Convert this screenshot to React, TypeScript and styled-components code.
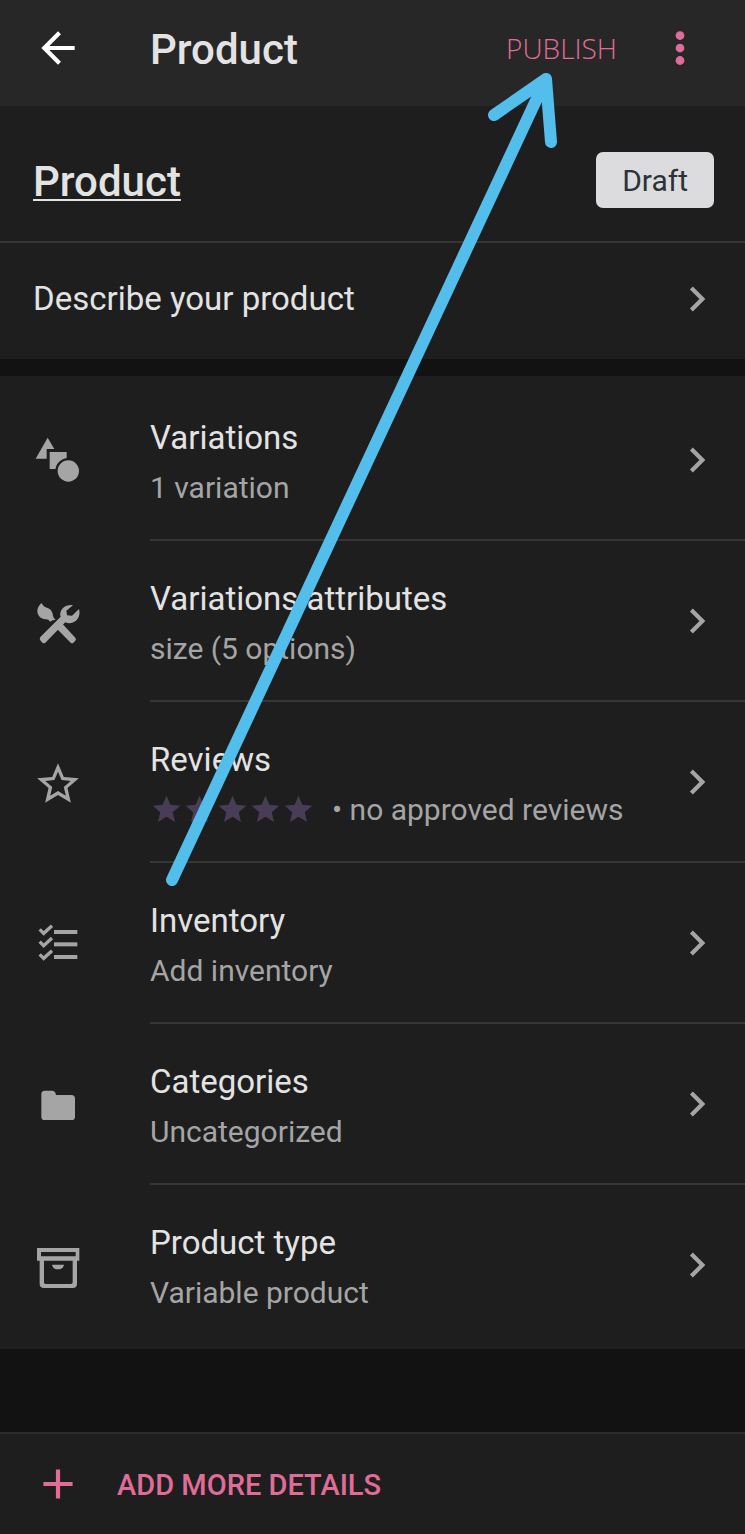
import React from "react";
import styled, { createGlobalStyle } from "styled-components";

const colors = {
  page: "#121212",
  surface: "#1e1e1e",
  bar: "#272727",
  divider: "#363636",
  text: "#e3e3e3",
  muted: "#a5a5a5",
  accent: "#e06c98",
  rating: "#493c57",
  annotation: "#53bdeb",
};

const GlobalStyle = createGlobalStyle`
  *, *::before, *::after { box-sizing: border-box; }
  body {
    margin: 0;
    background: ${colors.page};
    color: ${colors.text};
    font-family: Roboto, "Liberation Sans", sans-serif;
  }
  button { font-family: inherit; }
`;

const Screen = styled.div`
  position: relative;
  display: flex;
  flex-direction: column;
  min-height: 100vh;
`;

const AppBar = styled.header`
  display: flex;
  align-items: center;
  height: 106px;
  padding: 0 40px 10px 33px;
  background: ${colors.bar};
`;

const IconButton = styled.button<{ $color: string }>`
  display: flex;
  flex: none;
  padding: 0;
  border: 0;
  background: none;
  color: ${(p) => p.$color};
  cursor: pointer;
`;

const BarTitle = styled.h1`
  flex: 1;
  margin: 0 0 0 67px;
  padding-top: 4px;
  font-size: 42px;
  font-weight: 500;
  line-height: 50px;
`;

const PublishButton = styled.button`
  margin-right: 38px;
  padding: 0;
  border: 0;
  background: none;
  color: ${colors.accent};
  font-family: "Open Sans", "Noto Sans", sans-serif;
  font-size: 28px;
  font-weight: 300;
  line-height: 50px;
  cursor: pointer;
`;

const NameRow = styled.section`
  display: flex;
  align-items: center;
  justify-content: space-between;
  height: 137px;
  padding: 12px 31px 0 33px;
  border-bottom: 2px solid ${colors.divider};
  background: ${colors.surface};
`;

const ProductName = styled.h2`
  margin: 0;
  padding-top: 4px;
  font-size: 42px;
  font-weight: 500;
  line-height: 50px;
  text-decoration: underline;
  text-decoration-thickness: 2px;
  text-underline-offset: 3px;
  text-decoration-skip-ink: none;
`;

const StatusTag = styled.span`
  padding: 2px 26px 0;
  border-radius: 7px;
  background: #dcdcdf;
  color: #2c3338;
  font-size: 30px;
  line-height: 54px;
`;

const DescribeRow = styled.button`
  display: flex;
  align-items: center;
  justify-content: space-between;
  height: 116px;
  padding: 0 23px 4px 33px;
  border: 0;
  background: ${colors.surface};
  color: ${colors.muted};
  text-align: left;
  cursor: pointer;
`;

const DetailList = styled.ul`
  margin: 17px 0 0;
  padding: 4px 0 3px;
  background: ${colors.surface};
  list-style: none;
`;

const DetailRow = styled.button`
  display: flex;
  gap: 67px;
  width: 100%;
  padding: 0 0 0 33px;
  border: 0;
  background: none;
  color: ${colors.muted};
  text-align: left;
  cursor: pointer;

  & > svg { margin-top: 57px; }
`;

const DetailBody = styled.span`
  display: flex;
  flex: 1;
  align-items: center;
  justify-content: space-between;
  padding-right: 23px;
  border-bottom: 2px solid ${colors.divider};

  li:last-child & { border-bottom-color: transparent; }
`;

const DetailText = styled.span`
  display: flex;
  flex-direction: column;
  padding: 33px 0 26px;
`;

const DetailTitle = styled.span`
  color: ${colors.text};
  font-size: 33px;
  line-height: 50px;
`;

const DetailNote = styled.span`
  display: flex;
  align-items: center;
  color: ${colors.muted};
  font-size: 30px;
  line-height: 50px;
`;

const Rating = styled.span`
  display: flex;
  margin-right: 17px;
  padding-bottom: 2px;
  color: ${colors.rating};
`;

const Footer = styled.footer`
  display: flex;
  margin-top: 83px;
  border-top: 2px solid #2c2c2c;
  background: ${colors.surface};
`;

const AddButton = styled.button`
  display: flex;
  flex: 1;
  align-items: center;
  gap: 34px;
  height: 100px;
  padding: 0 33px;
  border: 0;
  background: none;
  color: ${colors.accent};
  font-size: 29px;
  font-weight: 500;
  line-height: 50px;
  cursor: pointer;
`;

const AddLabel = styled.span`
  padding-top: 2px;
`;

const Annotation = styled.svg`
  position: absolute;
  top: 60px;
  right: 175px;
  pointer-events: none;
`;

const Svg = styled.svg`
  display: block;
  flex: none;
  fill: currentColor;
`;

type IconProps = { size?: number; box?: string; children: React.ReactNode };

const Icon = ({ size = 50, box = "0 0 24 24", children }: IconProps) => (
  <Svg width={size} height={size} viewBox={box} aria-hidden="true">
    {children}
  </Svg>
);

const Chevron = () => (
  <Icon>
    <path d="M10 6 8.59 7.41 13.17 12l-4.58 4.59L10 18l6-6z" />
  </Icon>
);

const ShapesIcon = () => (
  <Icon box="39 51 150 150">
    <path d="M83 53 47 116H80V87H103Z" />
    <path d="M89 96H140V147H89Z" />
    <circle cx="145" cy="153" r="35" fill="none" stroke={colors.surface} strokeWidth="8" />
    <circle cx="145" cy="153" r="32" />
  </Icon>
);

const ToolsIcon = () => (
  <Icon box="39 39 150 150">
    <path d="M65 54c-10 8-15 19-12 31 3 11 13 18 25 18 5 0 9 2 12 7l8-4 9-2c-4-3-7-7-8-12-1-12-7-20-16-23-9-2-15-7-18-15z" />
    <path d="M109 130 125 114 166 158Q170 163 166 167L160 173Q156 176 152 173Z" />
    <path d="M159 61C145 57 127 66 122 80c-2 6-2 11 0 15L61 156Q57 161 61 166L67 173Q71 176 76 173L136 112c15 6 31 1 38-12 5-9 6-18 3-28l-21 20-15-1-2-14Z" />
  </Icon>
);

const StarOutlineIcon = () => (
  <Icon>
    <path d="M22 9.24l-7.19-.62L12 2 9.19 8.63 2 9.24l5.46 4.73L5.82 21 12 17.27 18.18 21l-1.63-7.03L22 9.24zM12 15.4l-3.76 2.27 1-4.28-3.32-2.88 4.38-.38L12 6.1l1.71 4.04 4.38.38-3.32 2.88 1 4.28L12 15.4z" />
  </Icon>
);

const ChecklistIcon = () => (
  <Icon box="39 45 150 150">
    {[0, 37, 75].map((y) => (
      <g key={y} transform={`translate(0 ${y})`}>
        <path d="M59 73 71 85 96 62" fill="none" stroke="currentColor" strokeWidth="10" />
        <path d="M102 75H172V87H102Z" />
      </g>
    ))}
  </Icon>
);

const FolderIcon = () => (
  <Icon box="39 33 150 150">
    <path d="M74 62H98Q106 63 108 75H154Q165 75 165 86V140Q165 150 155 150H74Q64 150 64 140V73Q64 62 74 62Z" />
  </Icon>
);

const BoxIcon = () => (
  <Icon box="39 36 150 150">
    <path
      fillRule="evenodd"
      d="M51 54H178V92H171V161Q171 174 158 174H72Q59 174 59 161V92H51ZM63 66V79H167V66ZM72 92V157Q72 162 77 162H153Q158 162 158 157V92Z"
    />
    <path d="M96 104H132Q129 118 114 118T96 104Z" />
  </Icon>
);

const Stars = () => (
  <Rating role="img" aria-label="0 of 5 stars">
    {[1, 2, 3, 4, 5].map((n) => (
      <Icon key={n} size={33}>
        <path d="M12 17.27 18.18 21l-1.64-7.03L22 9.24l-7.19-.61L12 2 9.19 8.63 2 9.24l5.46 4.73L5.82 21z" />
      </Icon>
    ))}
  </Rating>
);

const details = [
  { icon: <ShapesIcon />, title: "Variations", note: "1 variation" },
  { icon: <ToolsIcon />, title: "Variations attributes", note: "size (5 options)" },
  { icon: <StarOutlineIcon />, title: "Reviews", note: "• no approved reviews", rated: true },
  { icon: <ChecklistIcon />, title: "Inventory", note: "Add inventory" },
  { icon: <FolderIcon />, title: "Categories", note: "Uncategorized" },
  { icon: <BoxIcon />, title: "Product type", note: "Variable product" },
];

export default function App() {
  return (
    <>
      <GlobalStyle />
      <Screen>
        <AppBar>
          <IconButton $color="#ffffff" aria-label="Back">
            <Icon>
              <path d="M20 11H7.83l5.59-5.59L12 4l-8 8 8 8 1.41-1.41L7.83 13H20v-2z" />
            </Icon>
          </IconButton>
          <BarTitle>Product</BarTitle>
          <PublishButton>PUBLISH</PublishButton>
          <IconButton $color={colors.accent} aria-label="More options">
            <Icon>
              <circle cx="12" cy="6" r="2.1" />
              <circle cx="12" cy="12" r="2.1" />
              <circle cx="12" cy="18" r="2.1" />
            </Icon>
          </IconButton>
        </AppBar>

        <NameRow>
          <ProductName>Product</ProductName>
          <StatusTag>Draft</StatusTag>
        </NameRow>

        <DescribeRow>
          <DetailTitle>Describe your product</DetailTitle>
          <Chevron />
        </DescribeRow>

        <DetailList>
          {details.map((d) => (
            <li key={d.title}>
              <DetailRow>
                {d.icon}
                <DetailBody>
                  <DetailText>
                    <DetailTitle>{d.title}</DetailTitle>
                    <DetailNote>
                      {d.rated && <Stars />}
                      {d.note}
                    </DetailNote>
                  </DetailText>
                  <Chevron />
                </DetailBody>
              </DetailRow>
            </li>
          ))}
        </DetailList>

        <Footer>
          <AddButton>
            <Icon>
              <path d="M19 13h-6v6h-2v-6H5v-2h6V5h2v6h6z" />
            </Icon>
            <AddLabel>ADD MORE DETAILS</AddLabel>
          </AddButton>
        </Footer>

        <Annotation
          width="420"
          height="840"
          viewBox="150 60 420 840"
          fill="none"
          stroke={colors.annotation}
          strokeWidth="12"
          strokeLinecap="round"
          strokeLinejoin="round"
          aria-hidden="true"
        >
          <path d="M172 880 546 79M494 115 546 79 551 142" />
        </Annotation>
      </Screen>
    </>
  );
}
